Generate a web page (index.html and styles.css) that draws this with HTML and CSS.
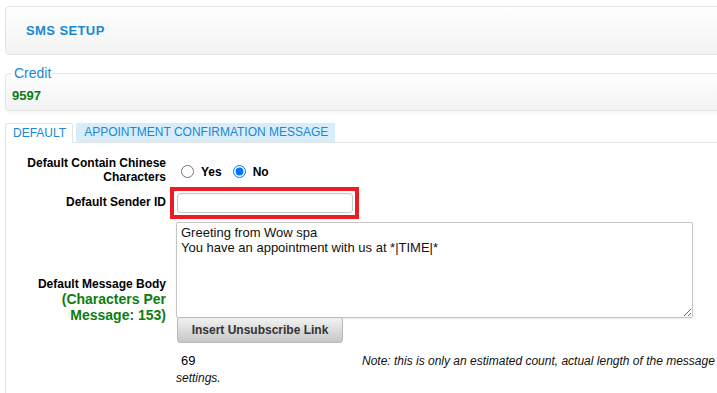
FILE: index.html
```html
<!DOCTYPE html>
<html>
<head>
<meta charset="utf-8">
<link rel="stylesheet" href="styles.css">
</head>
<body>
<div class="page">
  <div class="header"><h1 class="title">SMS SETUP</h1></div>

  <fieldset class="credit">
    <legend class="credit-legend">Credit</legend>
    <div class="credit-value">9597</div>
  </fieldset>

  <div class="tabs">
    <div class="tab tab-active">DEFAULT</div>
    <div class="tab tab-other">APPOINTMENT CONFIRMATION MESSAGE</div>
  </div>

  <div class="panel">
    <div class="form">
      <div class="label label-chinese">Default Contain Chinese Characters</div>
      <div class="control radios">
        <label class="radio"><input type="radio" name="cn"> Yes</label>
        <label class="radio"><input type="radio" name="cn" checked> No</label>
      </div>

      <div class="label label-sender">Default Sender ID</div>
      <div class="control">
        <div class="highlight"><input type="text" class="text-input"></div>
      </div>

      <div class="label label-body">Default Message Body<br><span class="green">(Characters Per Message: 153)</span></div>
      <div class="control body-control">
        <textarea class="message">Greeting from Wow spa
You have an appointment with us at *|TIME|*</textarea>
        <button class="btn">Insert Unsubscribe Link</button>
      </div>

      <div class="label"></div>
      <div class="control count">
        <div class="count-line"><span class="count-num">69</span><span class="note">Note: this is only an estimated count, actual length of the message</span></div>
        <div class="note note-end">settings.</div>
      </div>
    </div>
  </div>
</div>
</body>
</html>
```

FILE: styles.css
```css
html, body {
  margin: 0;
  padding: 0;
  background: #fff;
  overflow: hidden;
}
body {
  font-family: "Liberation Sans", Arial, sans-serif;
  color: #000;
}
.page {
  width: 760px;
  padding: 6px 0 0 5px;
}
.header {
  height: 47px;
  border: 1px solid #e4e4e4;
  border-radius: 4px;
  background: linear-gradient(#fdfefe, #f3f3f3);
  display: flex;
  align-items: center;
  padding-left: 20px;
}
.title {
  margin: 0;
  font-size: 13px;
  font-weight: bold;
  color: #1b87d2;
  letter-spacing: 0.4px;
}
.credit {
  margin: 10px 0 0 0;
  padding: 7px 6px 6px 6px;
  border: 1px solid #e4e4e4;
  border-radius: 4px;
  background: linear-gradient(#fdfefe, #f3f3f3);
  box-shadow: 0 2px 3px rgba(0, 0, 0, 0.04);
  min-width: 0;
}
.credit-legend {
  padding: 0 2px;
  font-size: 14px;
  line-height: 16px;
  color: #1b87d2;
}
.credit-value {
  font-size: 13px;
  line-height: 16px;
  font-weight: bold;
  color: #0c7d0c;
}
.tabs {
  margin-top: 12px;
  display: flex;
  border-bottom: 1px solid #e4e4e4;
  height: 19px;
}
.tab {
  font-size: 12px;
  line-height: 19px;
  color: #1b87d2;
  height: 19px;
}
.tab-active {
  border: 1px solid #e4e4e4;
  border-bottom: none;
  background: #fff;
  padding: 0 6px 0 7px;
  height: 19px;
  margin-bottom: -1px;
  line-height: 19px;
  border-radius: 2px 2px 0 0;
}
.tab-other {
  margin-left: 3px;
  background: #d8edfa;
  padding: 0 7px 0 8px;
}
.panel {
  border-left: 1px solid #e4e4e4;
  padding-bottom: 20px;
}
.form {
  display: grid;
  grid-template-columns: 160px 1fr;
  column-gap: 10px;
  align-items: center;
}
.label {
  text-align: right;
  font-size: 12px;
  font-weight: bold;
  line-height: 14px;
}
.label-chinese {
  margin-top: 13px;
}
.control {
  font-size: 12px;
}
.radios {
  margin-top: 16px;
  display: flex;
  align-items: center;
}
.radio {
  display: flex;
  align-items: center;
  font-weight: bold;
  font-size: 12px;
  margin-right: 6px;
}
.radio input {
  margin: 0 7px 0 5px;
  width: 13px;
  height: 13px;
}
.highlight {
  margin: 3px 0 0 -6px;
  width: 176px;
  border: 4px solid #ec1c24;
  padding: 2px 2px 2px 3px;
}
.text-input {
  display: block;
  box-sizing: border-box;
  width: 176px;
  height: 20px;
  margin: 0;
  border: 1px solid #c9c9c9;
  border-radius: 3px;
  box-shadow: inset 0 1px 2px rgba(0, 0, 0, 0.06);
  outline: none;
}
.body-control {
  margin-top: 3px;
  display: flex;
  flex-direction: column;
  align-items: flex-start;
}
.message {
  box-sizing: border-box;
  width: 517px;
  height: 96px;
  margin: 0;
  padding: 2px 4px;
  border: 1px solid #c6c6c6;
  border-radius: 2px;
  box-shadow: 0 1px 2px rgba(0, 0, 0, 0.08);
  font-family: "Liberation Sans", Arial, sans-serif;
  font-size: 13px;
  line-height: 15px;
  color: #111;
}
.btn {
  margin: -1px 0 0 1px;
  width: 166px;
  height: 26px;
  border: 1px solid #b9b9b9;
  border-radius: 3px;
  background: linear-gradient(#f2f2f2, #c6c6c6);
  font-family: "Liberation Sans", Arial, sans-serif;
  font-size: 12px;
  font-weight: bold;
  color: #333;
  padding: 0;
}
.label-body {
  align-self: end;
  padding-bottom: 19px;
  line-height: 16px;
}
.green {
  color: #0c7d0c;
  font-size: 14px;
  line-height: 15px;
}
.count {
  margin-top: 9px;
  align-self: start;
}
.count-line {
  display: flex;
  align-items: baseline;
  white-space: nowrap;
  line-height: 18px;
}
.count-num {
  font-size: 13px;
  padding-left: 5px;
  width: 181px;
}
.note {
  font-style: italic;
  font-size: 12px;
  line-height: 18px;
  color: #111;
}
.note-end {
  margin-top: -1px;
}
```
